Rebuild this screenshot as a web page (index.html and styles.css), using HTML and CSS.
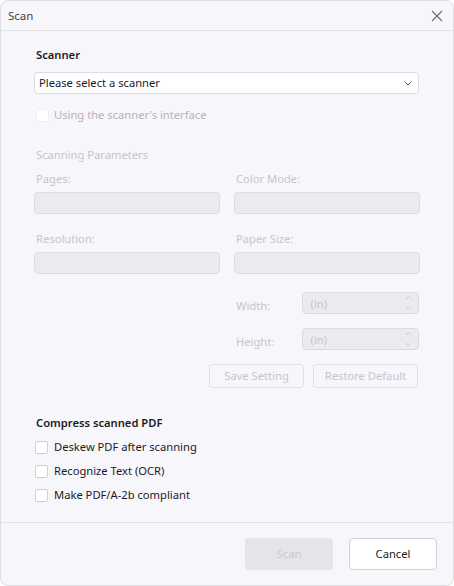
FILE: index.html
```html
<!DOCTYPE html>
<html>
<head>
<meta charset="utf-8">
<link rel="stylesheet" href="styles.css">
</head>
<body>
<div class="dialog">
  <div class="titlebar">
    <span class="title">Scan</span>
    <svg class="close" width="12" height="12" viewBox="0 0 12 12"><path d="M1 1L11 11M11 1L1 11" stroke="#6a6a70" stroke-width="1.1" fill="none"/></svg>
  </div>
  <div class="content">
    <div class="label strong">Scanner</div>
    <div class="select">
      <span>Please select a scanner</span>
      <svg width="8" height="5" viewBox="0 0 8 5"><path d="M0.5 0.5L4 4L7.5 0.5" stroke="#555" stroke-width="1" fill="none"/></svg>
    </div>
    <div class="check disabled first">
      <span class="box faint"></span><span>Using the scanner's interface</span>
    </div>
    <div class="label section disabled-text">Scanning Parameters</div>
    <div class="grid">
      <div class="field">
        <div class="label disabled-text">Pages:</div>
        <div class="input"></div>
      </div>
      <div class="field">
        <div class="label disabled-text">Color Mode:</div>
        <div class="input"></div>
      </div>
      <div class="field">
        <div class="label disabled-text">Resolution:</div>
        <div class="input"></div>
      </div>
      <div class="field">
        <div class="label disabled-text">Paper Size:</div>
        <div class="input"></div>
      </div>
    </div>
    <div class="dims">
      <div class="dim">
        <span class="dimlabel disabled-text">Width:</span>
        <div class="spin"><span>(in)</span>
          <svg width="7" height="16" viewBox="0 0 7 16"><path d="M1 4L3.5 1.5L6 4M1 12L3.5 14.5L6 12" stroke="#c9c8ce" stroke-width="1" fill="none"/></svg>
        </div>
      </div>
      <div class="dim">
        <span class="dimlabel disabled-text">Height:</span>
        <div class="spin"><span>(in)</span>
          <svg width="7" height="16" viewBox="0 0 7 16"><path d="M1 4L3.5 1.5L6 4M1 12L3.5 14.5L6 12" stroke="#c9c8ce" stroke-width="1" fill="none"/></svg>
        </div>
      </div>
    </div>
    <div class="actions">
      <div class="btn ghost save">Save Setting</div>
      <div class="btn ghost restore">Restore Default</div>
    </div>
    <div class="label strong compress">Compress scanned PDF</div>
    <div class="checks">
      <div class="check"><span class="box"></span><span>Deskew PDF after scanning</span></div>
      <div class="check"><span class="box"></span><span>Recognize Text (OCR)</span></div>
      <div class="check"><span class="box"></span><span>Make PDF/A-2b compliant</span></div>
    </div>
  </div>
  <div class="footer">
    <div class="btn big scan">Scan</div>
    <div class="btn big cancel">Cancel</div>
  </div>
</div>
</body>
</html>
```
FILE: styles.css
```css
* { box-sizing: border-box; }
html, body { margin: 0; padding: 0; background: #ffffff; }
body {
  font-family: "Noto Sans", "Open Sans", sans-serif;
  font-size: 11.2px;
  color: #1b1b1f;
}
.dialog {
  width: 454px;
  height: 586px;
  background: #f7f6fb;
  border: 1px solid #dfdee4;
  border-radius: 8px;
  display: flex;
  flex-direction: column;
  overflow: hidden;
}
.titlebar {
  height: 30px;
  border-bottom: 1px solid #e2e1e7;
  display: flex;
  align-items: center;
  justify-content: space-between;
  padding: 0 10px 0 7px;
  flex: none;
}
.title { color: #444448; font-size: 11.5px; line-height: 16px; }
.close { display: block; margin-top: 1px; }
.content {
  flex: 1;
  padding: 16px 34px 0 33px;
  display: flex;
  flex-direction: column;
}
.label { line-height: 16px; padding-left: 2px; }
.strong { font-weight: 600; color: #1b1b1f; }
.disabled-text { color: #c6c5cb; }
.select {
  margin-top: 9px;
  height: 22px;
  background: #ffffff;
  border: 1px solid #dddce2;
  border-radius: 4px;
  display: flex;
  align-items: center;
  justify-content: space-between;
  padding: 0 6px 0 4px;
}
.select span { line-height: 16px; }
.check {
  display: flex;
  align-items: center;
  height: 16px;
  line-height: 16px;
}
.check .box {
  width: 13px;
  height: 13px;
  border: 1px solid #cfced4;
  border-radius: 2px;
  background: #ffffff;
  margin-right: 6px;
  margin-left: 1px;
}
.check .box.faint { border-color: #f0eff4; margin-left: 2px; margin-right: 5px; }
.check.disabled { color: #b5b4ba; }
.first { margin-top: 13px; }
.section { margin-top: 24px; }
.grid {
  margin-top: 8px;
  display: grid;
  grid-template-columns: 186px 186px;
  column-gap: 14px;
  row-gap: 17px;
}
.field .input {
  margin-top: 5px;
  height: 22px;
  background: #ebeaef;
  border: 1px solid #dcdbe1;
  border-radius: 4px;
}
.dims {
  margin-top: 18px;
  display: flex;
  flex-direction: column;
  gap: 14px;
  padding-left: 202px;
}
.dim { display: flex; align-items: center; }
.dimlabel { width: 66px; padding-top: 6px; line-height: 16px; }
.spin {
  width: 118px;
  height: 22px;
  background: #ebeaef;
  border: 1px solid #dcdbe1;
  border-radius: 4px;
  display: flex;
  align-items: center;
  justify-content: space-between;
  padding: 0 6px 0 8px;
  color: #c6c5cb;
}
.spin svg { display: block; }
.actions {
  margin-top: 14px;
  display: flex;
  justify-content: flex-end;
  gap: 9px;
  padding-right: 1px;
}
.btn {
  display: flex;
  align-items: center;
  justify-content: center;
  border-radius: 4px;
  line-height: 16px;
}
.ghost {
  height: 24px;
  border: 1px solid #e1e0e6;
  color: #c6c5cb;
}
.save { width: 95px; }
.restore { width: 105px; }
.compress { margin-top: 27px; }
.checks {
  margin-top: 8px;
  display: flex;
  flex-direction: column;
  gap: 8px;
}
.footer {
  flex: none;
  height: 63px;
  border-top: 1px solid #e2e1e7;
  display: flex;
  justify-content: flex-end;
  align-items: flex-start;
  gap: 16px;
  padding: 15px 16px 0 0;
}
.big { width: 88px; height: 32px; }
.scan { background: #e5e4e9; color: #c9c8ce; }
.cancel { background: #ffffff; border: 1px solid #d2d1d7; color: #1b1b1f; }
```
